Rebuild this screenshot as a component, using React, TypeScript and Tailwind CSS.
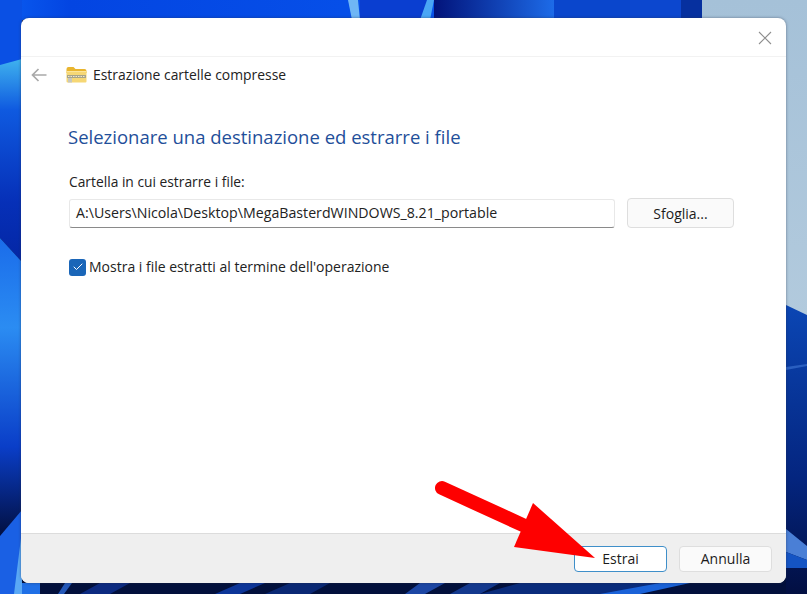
import { Check } from "lucide-react";

function Wallpaper() {
  return (
    <svg className="absolute inset-0" width="807" height="594" viewBox="0 0 807 594">
      <defs>
        <linearGradient id="top" x1="0" y1="0" x2="1" y2="0">
          <stop offset="0" stopColor="#0a5cf0" />
          <stop offset="0.1" stopColor="#0345e2" />
          <stop offset="1" stopColor="#0a5cf0" />
        </linearGradient>
        <linearGradient id="leftA" x1="0" y1="0" x2="0" y2="1">
          <stop offset="0" stopColor="#3fb2ee" />
          <stop offset="0.25" stopColor="#0f5ae0" />
          <stop offset="0.7" stopColor="#0630b8" />
          <stop offset="1" stopColor="#0426a4" />
        </linearGradient>
        <linearGradient id="leftB" x1="0" y1="0" x2="0" y2="1">
          <stop offset="0" stopColor="#1a6cea" />
          <stop offset="0.3" stopColor="#2b8cf2" />
          <stop offset="0.7" stopColor="#0a3ec8" />
          <stop offset="1" stopColor="#020f40" />
        </linearGradient>
        <linearGradient id="right" x1="0" y1="0" x2="0" y2="1">
          <stop offset="0" stopColor="#0b46b4" />
          <stop offset="0.6" stopColor="#04257f" />
          <stop offset="1" stopColor="#020f42" />
        </linearGradient>
        <linearGradient id="pale" x1="0" y1="0" x2="0" y2="1">
          <stop offset="0" stopColor="#a5c1d8" />
          <stop offset="1" stopColor="#b2cadd" />
        </linearGradient>
        <linearGradient id="navy" x1="0" y1="0" x2="1" y2="0">
          <stop offset="0" stopColor="#02137a" />
          <stop offset="1" stopColor="#1d6be8" />
        </linearGradient>
      </defs>
      <rect width="807" height="594" fill="#02103c" />
      <rect width="702" height="20" fill="url(#top)" />
      <polygon points="348,0 358,0 360,20 352,20" fill="#6fb6f5" />
      <rect x="360" width="70" height="20" fill="#0a3ed0" />
      <polygon points="427,0 434,0 430,20 420,20" fill="#4aa6f5" />
      <rect x="434" width="120" height="20" fill="url(#navy)" />
      <rect x="554" width="76" height="20" fill="#0a46cc" />
      <rect x="630" width="60" height="20" fill="#0c47cf" />
      <rect x="681" width="21" height="20" fill="#06309f" />
      <rect x="702" width="105" height="320" fill="url(#pale)" />

      <rect width="22" height="66" fill="#0a50e4" />
      <polygon points="0,65 22,59 22,262 0,238" fill="url(#leftA)" />
      <polygon points="0,238 22,262 22,512 0,536" fill="url(#leftB)" />
      <polygon points="0,536 22,510 22,594 0,594" fill="#1a60e4" />
      <polygon points="14,594 22,530 22,594" fill="#5aa8f5" />

      <polygon points="786,305 807,315 807,594 786,594" fill="url(#right)" />
      <polygon points="786,367 807,364 807,366 786,370" fill="#2a5fc0" />
      <polygon points="786,529 807,546 807,560 786,552" fill="#4a7fd6" />
      <polygon points="786,552 807,560 807,568 786,568" fill="#1454c4" />

      <polygon points="22,583 40,583 40,594 22,594" fill="#1f6fe6" />
      <polygon points="65,583 72,583 64,594 58,594" fill="#2458b8" />
      <polygon points="100,583 130,583 110,594 80,594" fill="#0c2a80" />
      <polygon points="240,583 265,583 240,594 215,594" fill="#0c3598" />
      <polygon points="290,583 330,583 310,594 265,594" fill="#0a2874" />
      <polygon points="420,583 445,583 425,594 405,594" fill="#1c46a4" />
      <polygon points="470,583 500,583 480,594 450,594" fill="#14398e" />
      <polygon points="520,583 660,583 620,594 480,594" fill="#0a2c7c" />
      <polygon points="660,583 690,583 640,594 600,594" fill="#1a62d8" />
    </svg>
  );
}

function FolderIcon() {
  return (
    <svg width="21" height="18" viewBox="0 0 21 18">
      <path d="M0.5 3a2 2 0 0 1 2-2h5l2 2h9a2 2 0 0 1 2 2v2h-20z" fill="#e9b52f" />
      <rect x="0.5" y="5" width="20" height="11.5" rx="1" fill="#f6d775" />
      <rect x="0.5" y="5" width="20" height="1" fill="#fbe59c" />
      <rect x="1" y="9" width="19" height="3" fill="#a8a489" />
      <path d="M2 10.5h17" stroke="#eee8cc" strokeWidth="1" strokeDasharray="1.5 1" />
      <rect x="2" y="12" width="4" height="4.5" fill="#c7c7bd" />
    </svg>
  );
}

function Button({ label, focused }: { label: string; focused?: boolean }) {
  return (
    <button
      className={`h-[26px] w-[93px] rounded text-[14px] text-[#1b1b1b] ${
        focused ? "border-[1.5px] border-[#3f8fc9] bg-white" : "border border-[#dedede] bg-[#fafafa]"
      }`}
    >
      {label}
    </button>
  );
}

export default function App() {
  return (
    <div className="relative h-[594px] w-[807px] overflow-hidden font-['Open_Sans','Noto_Sans',sans-serif]">
      <Wallpaper />
      <div className="relative ml-[21px] mt-[18px] flex h-[565px] w-[765px] flex-col overflow-hidden rounded-lg bg-white shadow-[0_0_3px_rgba(40,50,70,0.55)]">
        <div className="flex h-[39px] shrink-0 items-start justify-end border-b border-[#f2f2f2] pr-[14px] pt-[13px]">
          <svg width="14" height="14" viewBox="0 0 14 14" stroke="#8f8f8f" strokeWidth="1.1">
            <path d="M1 1l12 12M13 1L1 13" />
          </svg>
        </div>

        <div className="flex h-[35px] shrink-0 items-center pl-[10px]">
          <svg width="16" height="14" viewBox="0 0 16 14" fill="none" stroke="#a9a9a9" strokeWidth="1.7">
            <path d="M15.5 7H1.5M7.5 1L1.5 7l6 6" />
          </svg>
          <span className="ml-[19px]">
            <FolderIcon />
          </span>
          <span className="ml-[6px] text-[13.9px] leading-none text-[#222]">Estrazione cartelle compresse</span>
        </div>

        <div className="flex flex-1 flex-col pl-[47px]">
          <h1 className="mt-[32px] text-[18.5px] leading-[26px] text-[#1f4f9a]">
            Selezionare una destinazione ed estrarre i file
          </h1>
          <label className="ml-px mt-[22px] text-[13.8px] leading-[20px] text-[#222]">
            Cartella in cui estrarre i file:
          </label>
          <div className="ml-px mt-[6px] flex items-center">
            <div className="flex h-[29px] w-[546px] items-center rounded-[3px] border border-[#e8e8e8] border-b-[#8a8a8a] pl-[6px] text-[14.2px] text-[#222]">
              A:\Users\Nicola\Desktop\MegaBasterdWINDOWS_8.21_portable
            </div>
            <button className="ml-[12px] h-[30px] w-[107px] rounded border border-[#dedede] bg-[#fafafa] text-[14px] text-[#1b1b1b]">
              Sfoglia...
            </button>
          </div>
          <div className="ml-px mt-[29px] flex items-center">
            <span className="flex h-[17px] w-[17px] items-center justify-center rounded-[3px] bg-[#1a66b8]">
              <Check size={12} color="white" strokeWidth={2} />
            </span>
            <span className="ml-[3px] text-[14px] leading-[20px] text-[#222]">
              Mostra i file estratti al termine dell'operazione
            </span>
          </div>
        </div>

        <div className="flex h-[50px] shrink-0 items-center justify-end gap-[12px] border-t border-[#dcdcdc] bg-[#efefef] pr-[14px]">
          <Button label="Estrai" focused />
          <Button label="Annulla" />
        </div>
      </div>

      <svg className="absolute inset-0" width="807" height="594" viewBox="0 0 807 594">
        <path d="M442 488L525 526" stroke="#fe0000" strokeWidth="14" strokeLinecap="round" />
        <polygon points="533,503 595,558 514,547" fill="#fe0000" />
      </svg>
    </div>
  );
}
